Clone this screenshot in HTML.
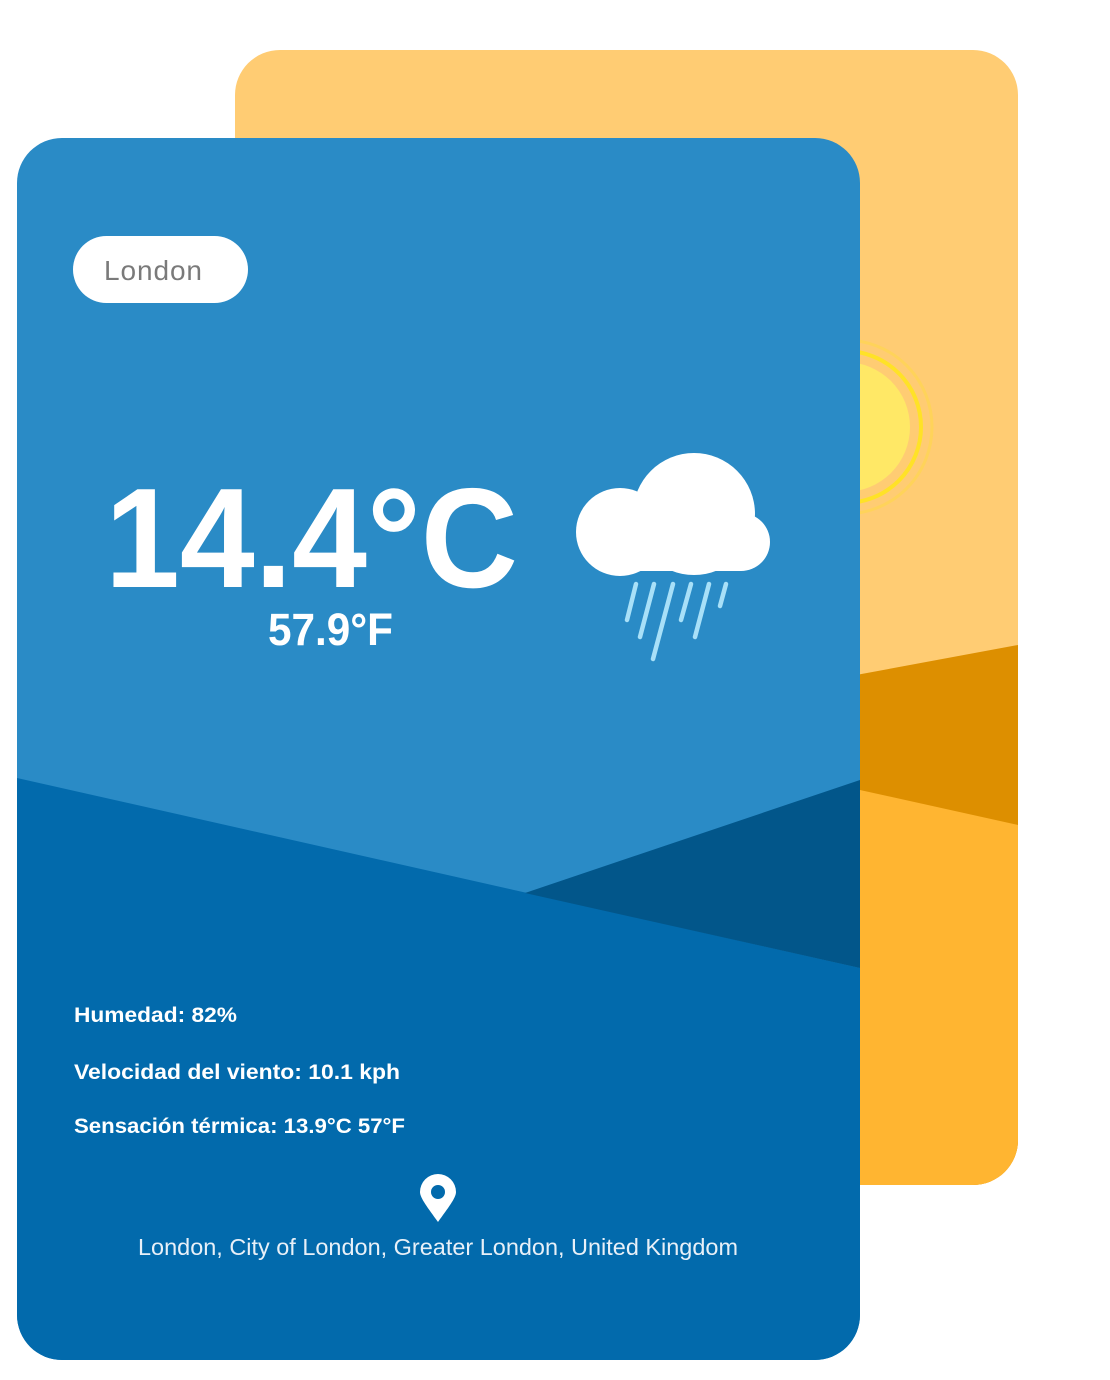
<!DOCTYPE html>
<html><head><meta charset="utf-8"><style>
html,body{margin:0;padding:0;background:#fff;width:1110px;height:1380px;overflow:hidden}
svg{display:block}
text{font-family:"Liberation Sans",sans-serif}
</style></head><body>
<svg width="1110" height="1380" viewBox="0 0 1110 1380" xmlns="http://www.w3.org/2000/svg">
<defs>
<clipPath id="yc"><rect x="235" y="50" width="783" height="1135" rx="45"/></clipPath>
<clipPath id="bc"><rect x="17" y="138" width="843" height="1222" rx="45"/></clipPath>
</defs>
<g clip-path="url(#yc)">
<rect x="235" y="50" width="783" height="1135" fill="#FFCC73"/>
<circle cx="845" cy="427" r="87" fill="none" stroke="#FFD35A" stroke-width="3"/>
<circle cx="845" cy="427" r="76" fill="none" stroke="#FFE227" stroke-width="4"/>
<circle cx="845" cy="427" r="65" fill="#FFE866"/>
<polygon points="235,790 1018,645 1018,1185 235,1185" fill="#DD8F00"/>
<polygon points="235,740 860,790 1018,825 1018,1185 235,1185" fill="#FFB531"/>
</g>
<g clip-path="url(#bc)">
<rect x="17" y="138" width="843" height="1222" fill="#2A8BC6"/>
<polygon points="17,778 860,968 860,1360 17,1360" fill="#026AAC"/>
<polygon points="525,893 860,780 860,968" fill="#02568A"/>
</g>
<rect x="73" y="236" width="175" height="67" rx="33.5" fill="#fff"/>
<text x="104" y="280" font-size="28" fill="#7a7a7a" textLength="98">London</text>
<text x="105" y="587" font-size="142" font-weight="bold" fill="#fff" textLength="413" lengthAdjust="spacingAndGlyphs">14.4°C</text>
<text x="268" y="645" font-size="45" font-weight="bold" fill="#fff" textLength="125" lengthAdjust="spacingAndGlyphs">57.9°F</text>
<g fill="#fff">
<circle cx="620" cy="532" r="44"/>
<circle cx="694" cy="514" r="61"/>
<circle cx="741" cy="542" r="29"/>
<rect x="620" y="530" width="121" height="41"/>
</g>
<g stroke="#A8E0F8" stroke-width="4.5" stroke-linecap="round">
<line x1="636" y1="584" x2="627" y2="620"/>
<line x1="654" y1="584" x2="640" y2="637"/>
<line x1="673" y1="584" x2="653" y2="659"/>
<line x1="691" y1="584" x2="681" y2="620"/>
<line x1="709" y1="584" x2="695" y2="637"/>
<line x1="726" y1="584" x2="720" y2="606"/>
</g>
<g fill="#fff" font-weight="bold" font-size="21">
<text x="74" y="1022" textLength="163" lengthAdjust="spacingAndGlyphs">Humedad: 82%</text>
<text x="74" y="1079" textLength="326" lengthAdjust="spacingAndGlyphs">Velocidad del viento: 10.1 kph</text>
<text x="74" y="1133" textLength="331" lengthAdjust="spacingAndGlyphs">Sensación térmica: 13.9°C 57°F</text>
</g>
<path d="M438 1222 C428 1208 420 1198 420 1192 A18 18 0 0 1 456 1192 C456 1198 448 1208 438 1222 Z M438 1185 A7 7 0 1 0 438 1199 A7 7 0 1 0 438 1185 Z" fill="#fff" fill-rule="evenodd"/>
<text x="138" y="1255" font-size="23" fill="#e8f0f8" textLength="600" lengthAdjust="spacingAndGlyphs">London, City of London, Greater London, United Kingdom</text>
</svg>
</body></html>
